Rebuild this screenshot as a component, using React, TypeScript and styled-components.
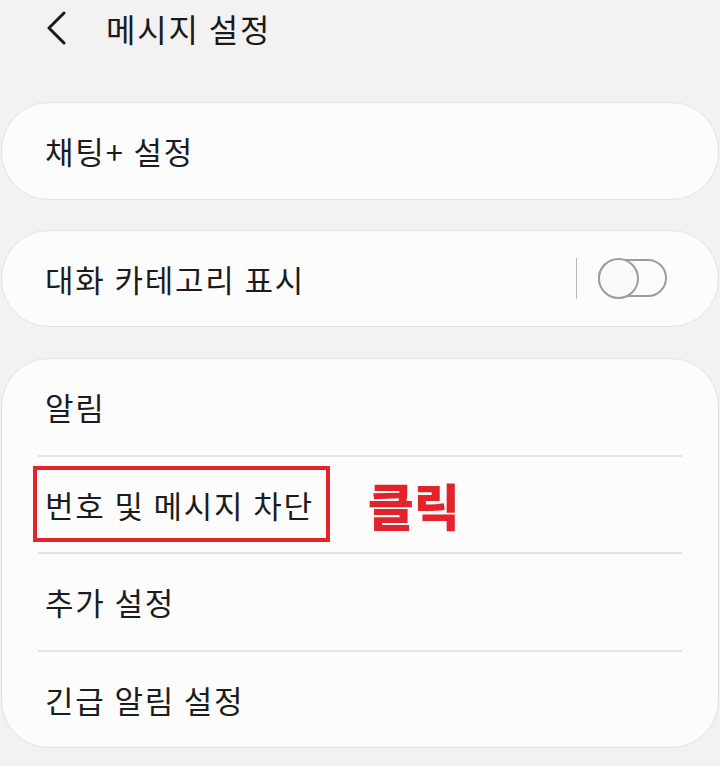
import React from "react"
import styled, { createGlobalStyle } from "styled-components"

const GlobalStyle = createGlobalStyle`
  html, body {
    margin: 0;
    padding: 0;
    background: #f2f2f2;
  }
  body {
    font-family: "Noto Sans CJK KR", "Noto Sans", sans-serif;
    color: #1c1c1c;
  }
`

const Page = styled.div`
  width: 720px;
  height: 766px;
  background: #f2f2f2;
  overflow: hidden;
`

const Header = styled.header`
  display: flex;
  align-items: center;
  height: 56px;
  padding-left: 45px;
  gap: 39px;
`

const BackButton = styled.div`
  display: flex;
  width: 22px;
  height: 34px;
  align-items: center;
`

const Title = styled.h1`
  margin: 0;
  font-size: 32px;
  font-weight: 400;
  letter-spacing: 1.8px;
  color: #1a1a1a;
`

const Cards = styled.div`
  display: flex;
  flex-direction: column;
  gap: 30px;
  padding: 46px 1px 0;
`

const Card = styled.section<{ $offset?: number }>`
  margin-top: ${(p) => p.$offset ?? 0}px;
  background: #fcfcfc;
  border: 1px solid #e2e2e2;
  border-radius: 48px;
  overflow: hidden;
`

const Row = styled.div<{ $divider?: boolean }>`
  display: flex;
  align-items: center;
  justify-content: space-between;
  height: 95.5px;
  margin: 0 36px;
  padding: 0 7px;
  border-top: ${(p) => (p.$divider ? "2px solid #e4e4e4" : "none")};
`

const Label = styled.span`
  font-size: 31px;
  letter-spacing: 1.8px;
  color: #1c1c1c;
`

const Highlight = styled.span`
  display: flex;
  align-items: center;
  margin-left: -12px;
  padding: 0 12px 0 8px;
  height: 76px;
  border: 4px solid #e3232c;
  box-sizing: border-box;
`

const ClickNote = styled.span`
  margin-left: 38px;
  font-size: 50px;
  font-weight: 900;
  color: #e3232c;
`

const Left = styled.div`
  display: flex;
  align-items: center;
`

const ToggleWrap = styled.div`
  display: flex;
  align-items: center;
  gap: 21px;
  margin-right: 8px;
`

const VDivider = styled.div`
  width: 1px;
  height: 41px;
  background: #b8b8b8;
`

const Track = styled.div`
  position: relative;
  width: 69px;
  height: 38px;
  border: 2px solid #9c9c9c;
  border-radius: 19px;
  box-sizing: border-box;
`

const Thumb = styled.div`
  position: absolute;
  left: -2px;
  top: -3.5px;
  width: 41px;
  height: 41px;
  border: 2px solid #9c9c9c;
  border-radius: 50%;
  background: #fafafa;
  box-sizing: border-box;
`

const settings = ["알림", "번호 및 메시지 차단", "추가 설정", "긴급 알림 설정"]

export default function App() {
  return (
    <Page>
      <GlobalStyle />
      <Header>
        <BackButton>
          <svg width="22" height="34" viewBox="0 0 22 34" fill="none">
            <path d="M19 2 L4 17 L19 32" stroke="#1a1a1a" strokeWidth="3" strokeLinecap="round" strokeLinejoin="round" />
          </svg>
        </BackButton>
        <Title>메시지 설정</Title>
      </Header>
      <Cards>
        <Card>
          <Row>
            <Label>채팅+ 설정</Label>
          </Row>
        </Card>
        <Card>
          <Row>
            <Label>대화 카테고리 표시</Label>
            <ToggleWrap>
              <VDivider />
              <Track>
                <Thumb />
              </Track>
            </ToggleWrap>
          </Row>
        </Card>
        <Card $offset={1}>
          {settings.map((s, i) => (
            <Row key={s} $divider={i > 0}>
              {i === 1 ? (
                <Left>
                  <Highlight>
                    <Label>{s}</Label>
                  </Highlight>
                  <ClickNote>클릭</ClickNote>
                </Left>
              ) : (
                <Label>{s}</Label>
              )}
            </Row>
          ))}
        </Card>
      </Cards>
    </Page>
  )
}
